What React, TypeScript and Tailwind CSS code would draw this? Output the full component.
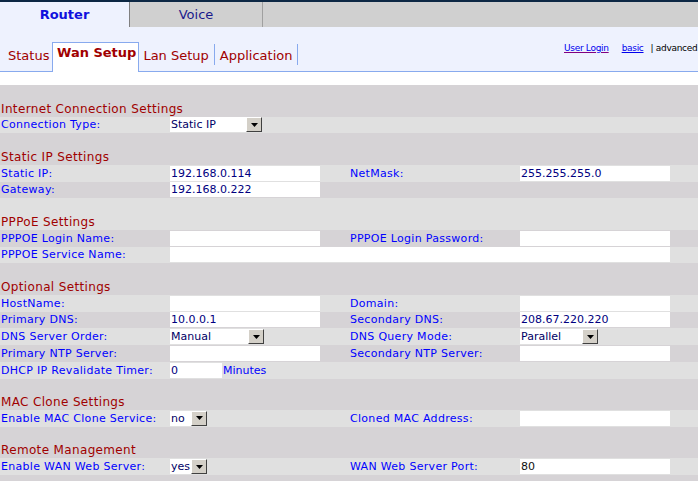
import React from 'react';

type Field =
  | { kind: 'input'; value?: string; w: string; dark?: boolean }
  | { kind: 'select'; value: string; w: string }
  | { kind: 'timer'; value: string };

interface Row {
  label: string;
  field: Field;
  label2?: string;
  field2?: Field;
  wide?: boolean;
}

interface Section {
  title: string;
  rows: Row[];
}

const sections: Section[] = [
  {
    title: 'Internet Connection Settings',
    rows: [{ label: 'Connection Type:', field: { kind: 'select', value: 'Static IP', w: 'w-[92px]' } }],
  },
  {
    title: 'Static IP Settings',
    rows: [
      {
        label: 'Static IP:',
        field: { kind: 'input', value: '192.168.0.114', w: 'w-[150px]' },
        label2: 'NetMask:',
        field2: { kind: 'input', value: '255.255.255.0', w: 'w-[150px]' },
      },
      { label: 'Gateway:', field: { kind: 'input', value: '192.168.0.222', w: 'w-[150px]' } },
    ],
  },
  {
    title: 'PPPoE Settings',
    rows: [
      {
        label: 'PPPOE Login Name:',
        field: { kind: 'input', w: 'w-[150px]' },
        label2: 'PPPOE Login Password:',
        field2: { kind: 'input', w: 'w-[150px]' },
      },
      { label: 'PPPOE Service Name:', field: { kind: 'input', w: 'w-[500px]' }, wide: true },
    ],
  },
  {
    title: 'Optional Settings',
    rows: [
      {
        label: 'HostName:',
        field: { kind: 'input', w: 'w-[150px]' },
        label2: 'Domain:',
        field2: { kind: 'input', w: 'w-[150px]' },
      },
      {
        label: 'Primary DNS:',
        field: { kind: 'input', value: '10.0.0.1', w: 'w-[150px]' },
        label2: 'Secondary DNS:',
        field2: { kind: 'input', value: '208.67.220.220', w: 'w-[150px]' },
      },
      {
        label: 'DNS Server Order:',
        field: { kind: 'select', value: 'Manual', w: 'w-[94px]' },
        label2: 'DNS Query Mode:',
        field2: { kind: 'select', value: 'Parallel', w: 'w-[78px]' },
      },
      {
        label: 'Primary NTP Server:',
        field: { kind: 'input', w: 'w-[150px]' },
        label2: 'Secondary NTP Server:',
        field2: { kind: 'input', w: 'w-[150px]' },
      },
      { label: 'DHCP IP Revalidate Timer:', field: { kind: 'timer', value: '0' } },
    ],
  },
  {
    title: 'MAC Clone Settings',
    rows: [
      {
        label: 'Enable MAC Clone Service:',
        field: { kind: 'select', value: 'no', w: 'w-[37px]' },
        label2: 'Cloned MAC Address:',
        field2: { kind: 'input', w: 'w-[150px]' },
      },
    ],
  },
  {
    title: 'Remote Management',
    rows: [
      {
        label: 'Enable WAN Web Server:',
        field: { kind: 'select', value: 'yes', w: 'w-[37px]' },
        label2: 'WAN Web Server Port:',
        field2: { kind: 'input', value: '80', w: 'w-[150px]', dark: true },
      },
    ],
  },
];

// classic win98 style combo arrow button
function DropButton() {
  return (
    <div className="flex h-[15px] w-[16px] items-center justify-center border border-t-white border-l-white border-r-[#404040] border-b-[#404040] bg-[#d4d0c8]">
      <svg width="7" height="4" viewBox="0 0 7 4">
        <polygon points="0,0 7,0 3.5,4" fill="#000" />
      </svg>
    </div>
  );
}

function FieldView({ field }: { field: Field }) {
  if (field.kind === 'select') {
    return (
      <div className={`flex h-[15px] bg-white ${field.w}`}>
        <span className="flex-1 overflow-hidden whitespace-nowrap pl-px text-[11px] leading-[15px] text-[#000066]">
          {field.value}
        </span>
        <DropButton />
      </div>
    );
  }
  if (field.kind === 'timer') {
    return (
      <div className="flex items-center">
        <div className="h-[15px] w-[52px] bg-white pl-px text-[11px] leading-[15px] text-[#000080]">{field.value}</div>
        <span className="ml-px text-[11px] leading-[13px] text-[#0000ff]">Minutes</span>
      </div>
    );
  }
  return (
    <div
      className={`h-[15px] bg-white pl-px text-[11px] leading-[15px] ${field.w} ${
        field.dark ? 'text-[#111111]' : 'text-[#000080]'
      }`}
    >
      {field.value}
    </div>
  );
}

function bg(i: number) {
  return i % 2 === 0 ? 'bg-[#d6d3d6]' : 'bg-[#e0e0e0]';
}

export default function App() {
  // every header block and field row flips the stripe colour
  let stripe = 0;

  return (
    <div className="h-[481px] w-[698px] overflow-hidden bg-[#d6d3d6] font-['DejaVu_Sans',Verdana,sans-serif]">
      <div className="h-[2px] bg-[#0c2744]" />

      {/* main tabs */}
      <div className="flex h-[25px] bg-[#d0d0d0]">
        <div className="w-[130px] border-r border-[#808080] bg-[#eef2fe] pt-px text-center text-[13px] font-bold leading-[24px] text-[#1010dd]">
          Router
        </div>
        <div className="w-[133px] border-r border-[#a0a0a0] pt-px text-center text-[13px] leading-[24px] text-[#1a1a8c]">
          Voice
        </div>
      </div>

      {/* sub navigation */}
      <div className="flex h-[45px] items-end border-b border-[#88aaee] bg-[#eef2fe] text-[13px] text-[#a00000]">
        <div className="mb-[6px] h-[21px] w-[52px] pl-[8px] pt-[4px] leading-[16px]">Status</div>
        <div className="mb-[-1px] h-[30px] border border-b-0 border-[#88aaee] bg-white pl-[4px] pr-[2px] pt-[2px] font-bold leading-[16px]">
          Wan Setup
        </div>
        <div className="mb-[6px] h-[21px] border-r border-[#88aaee] pl-[4px] pr-[5px] pt-[4px] leading-[16px]">Lan Setup</div>
        <div className="mb-[6px] h-[21px] border-r border-[#88aaee] px-[5px] pt-[4px] leading-[16px]">Application</div>
        <div className="flex-1" />
        <div className="mt-[15px] flex w-[134px] self-start whitespace-nowrap text-[9px] leading-[12px] tracking-[-0.3px]">
          <a className="text-[#0000ee] underline decoration-[#800080]">User Login</a>
          <a className="ml-[13px] text-[#0000ee] underline">basic</a>
          <span className="ml-[7px] text-black">| advanced</span>
        </div>
      </div>

      <div className="h-[13px] bg-white" />

      {/* settings table */}
      <div className="flex flex-col">
        {sections.map((s) => {
          const head = (
            <div key={s.title} className={`flex h-[31.5px] items-end pl-px ${bg(stripe++)}`}>
              <span className="text-[12px] leading-[16px] tracking-[0.35px] text-[#a00000]">{s.title}</span>
            </div>
          );
          const rows = s.rows.map((r) => (
            <div key={r.label} className={`flex h-[16.75px] items-center ${bg(stripe++)}`}>
              <div className="w-[170px] pl-px text-[11px] leading-[13px] tracking-[0.3px] text-[#0000ff]">{r.label}</div>
              <div className={r.wide ? 'w-[500px]' : 'w-[180px]'}>
                <FieldView field={r.field} />
              </div>
              {!r.wide && (
                <div className="w-[170px] text-[11px] leading-[13px] tracking-[0.3px] text-[#0000ff]">{r.label2}</div>
              )}
              {r.field2 && <FieldView field={r.field2} />}
            </div>
          ));
          return (
            <React.Fragment key={s.title}>
              {head}
              {rows}
            </React.Fragment>
          );
        })}
        <div className={`h-[16.75px] ${bg(stripe++)}`} />
      </div>
    </div>
  );
}
